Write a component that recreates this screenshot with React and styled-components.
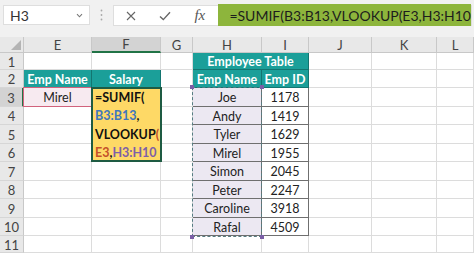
import React from 'react';
import styled, { createGlobalStyle, css } from 'styled-components';

const Global = createGlobalStyle`
  html, body { margin: 0; padding: 0; background: #fff; overflow: hidden; }
  body { font-family: Lato, "Liberation Sans", sans-serif; }
`;

const Page = styled.div`
  width: 474px;
  height: 253px;
  overflow: hidden;
  background: #fff;
  display: flex;
  flex-direction: column;
`;

const Toolbar = styled.div`
  height: 37px;
  flex: none;
  box-sizing: border-box;
  background: #f1f1f1;
  display: flex;
  align-items: flex-start;
  padding: 5px 2px 0 3px;
`;

const NameBox = styled.div`
  width: 107px;
  height: 20px;
  box-sizing: border-box;
  background: #fff;
  border: 1px solid #dedede;
  display: flex;
  align-items: center;
  justify-content: space-between;
  padding: 0 6px 0 6px;
  font-size: 14px;
  color: #333;
`;

const Grip = styled.div`
  width: 30px;
  height: 20px;
  display: flex;
  align-items: center;
  justify-content: center;
`;

const FxBox = styled.div`
  flex: 1;
  height: 21px;
  box-sizing: border-box;
  background: #fff;
  border: 1px solid #dedede;
  display: flex;
  align-items: stretch;
`;

const FxIcons = styled.div`
  width: 104px;
  flex: none;
  display: flex;
  align-items: center;
  gap: 23px;
  padding-left: 12px;
  box-sizing: border-box;
`;

const FxLabel = styled.span`
  font-family: "Liberation Serif", serif;
  font-style: italic;
  font-size: 15px;
  color: #555;
  line-height: 1;
`;

const Formula = styled.div`
  flex: 1;
  background: #8db53c;
  margin: -2px 0 -1px;
  display: flex;
  align-items: center;
  padding-left: 11px;
  font-size: 14px;
  color: #1d1d1d;
  white-space: nowrap;
  overflow: hidden;
`;

const Sheet = styled.div`
  flex: 1;
  display: grid;
  grid-template-columns: 24px 68px 69px 32px 69px 47px 63px 65px 1fr;
  grid-template-rows: 16px 17px 18px 19px 18px 19px 18px 19px 18px 19px 18px 17px;
`;

const kinds = {
  plain: css`
    background: #fff;
    border-right: 1px solid #dcdcdc;
    border-bottom: 1px solid #dcdcdc;
  `,
  head: css`
    background: #1b9f99;
    color: #fff;
    font-weight: 700;
    border-right: 1px solid #137570;
    border-bottom: 1px solid #137570;
  `,
  name: css`
    background: #ece8f2;
    border-right: 1px solid #6f6f6f;
    border-bottom: 1px solid #6f6f6f;
  `,
  id: css`
    background: #fff;
    border-right: 1px solid #6f6f6f;
    border-bottom: 1px solid #6f6f6f;
  `,
  ref: css`
    background: #f7eaf0;
    border: 1.5px solid #d1627c;
    margin: -1px 0 0 -1px;
  `,
};

const Cell = styled.div`
  grid-row: ${(p) => p.$r};
  grid-column: ${(p) => p.$c};
  box-sizing: border-box;
  display: flex;
  align-items: center;
  justify-content: center;
  padding-top: 1px;
  font-size: 12.5px;
  color: #222;
  white-space: nowrap;
  overflow: hidden;
  ${(p) => kinds[p.$kind || 'plain']}
`;

const ColHead = styled.div`
  grid-row: 1;
  grid-column: ${(p) => p.$c};
  box-sizing: border-box;
  background: ${(p) => (p.$sel ? '#d3d3d3' : '#e8e8e8')};
  border-right: 1px solid #c8c8c8;
  border-bottom: ${(p) => (p.$sel ? '2px solid #217346' : '1px solid #c8c8c8')};
  display: flex;
  align-items: center;
  justify-content: center;
  font-size: 13px;
  color: #444;
`;

const RowHead = styled.div`
  grid-row: ${(p) => p.$r};
  grid-column: 1;
  box-sizing: border-box;
  background: ${(p) => (p.$sel ? '#d3d3d3' : '#e8e8e8')};
  border-right: ${(p) => (p.$sel ? '2px solid #217346' : '1px solid #c8c8c8')};
  border-bottom: 1px solid #d6d6d6;
  display: flex;
  align-items: center;
  justify-content: center;
  padding-top: 1px;
  font-size: 13px;
  color: #444;
`;

const Corner = styled.div`
  grid-row: 1;
  grid-column: 1;
  box-sizing: border-box;
  background: #e8e8e8;
  border-right: 1px solid #c8c8c8;
  border-bottom: 1px solid #c8c8c8;
  display: flex;
  align-items: flex-end;
  justify-content: flex-end;
  padding: 0 2px 2px 0;
`;

const EditCell = styled.div`
  grid-row: 4 / span 4;
  grid-column: 3;
  box-sizing: border-box;
  margin: -1px -1px 0 -1px;
  background: #fed966;
  border: 2px solid #1e5b43;
  padding: 0 0 0 2px;
  font-size: 12.5px;
  font-weight: 700;
  line-height: 18.3px;
  color: #111;
  white-space: nowrap;
  overflow: hidden;
`;

const Tok = styled.span`
  color: ${(p) => p.$color};
`;

const RangeMark = styled.div`
  grid-row: 4 / span 8;
  grid-column: 5;
  box-sizing: border-box;
  margin: -1px 0 -1px -1px;
  border: 1.5px dashed #567c82;
  pointer-events: none;
  position: relative;
`;

const Handle = styled.span`
  position: absolute;
  width: 4px;
  height: 4px;
  background: #7b5fa6;
  ${(p) => (p.$top ? 'top: -3px;' : 'bottom: -3px;')}
  ${(p) => (p.$left ? 'left: -3px;' : 'right: -3px;')}
`;

const cols = ['E', 'F', 'G', 'H', 'I', 'J', 'K', 'L'];

const names = ['Joe', 'Andy', 'Tyler', 'Mirel', 'Simon', 'Peter', 'Caroline', 'Rafal'];
const ids = ['1178', '1419', '1629', '1955', '2045', '2247', '3918', '4509'];

function cellFor(col, row) {
  if (col === 'E' && row === 2) return { text: 'Emp Name', kind: 'head' };
  if (col === 'F' && row === 2) return { text: 'Salary', kind: 'head' };
  if (col === 'E' && row === 3) return { text: 'Mirel', kind: 'ref' };
  if (col === 'H' && row === 2) return { text: 'Emp Name', kind: 'head' };
  if (col === 'I' && row === 2) return { text: 'Emp ID', kind: 'head' };
  if (col === 'H' && row >= 3 && row <= 10) return { text: names[row - 3], kind: 'name' };
  if (col === 'I' && row >= 3 && row <= 10) return { text: ids[row - 3], kind: 'id' };
  return { text: '', kind: 'plain' };
}

export default function App() {
  const cells = [];
  for (let row = 1; row <= 11; row++) {
    cols.forEach((col, i) => {
      const c = i + 2;
      const r = row + 1;
      if (col === 'F' && row >= 3 && row <= 6) return;
      if (row === 1 && col === 'I') return;
      if (row === 1 && col === 'H') {
        cells.push(
          <Cell key="H1" $r={r} $c="5 / span 2" $kind="head">
            Employee Table
          </Cell>
        );
        return;
      }
      const d = cellFor(col, row);
      cells.push(
        <Cell key={col + row} $r={r} $c={c} $kind={d.kind}>
          {d.text}
        </Cell>
      );
    });
  }

  return (
    <Page>
      <Global />
      <Toolbar>
        <NameBox>
          <span>H3</span>
          <svg width="7" height="5" viewBox="0 0 7 5">
            <path d="M1 1.2 L3.5 3.8 L6 1.2" fill="none" stroke="#777" strokeWidth="1.1" />
          </svg>
        </NameBox>
        <Grip>
          <svg width="3" height="12" viewBox="0 0 3 12">
            <circle cx="1.5" cy="1.5" r="0.9" fill="#a8a8a8" />
            <circle cx="1.5" cy="6" r="0.9" fill="#a8a8a8" />
            <circle cx="1.5" cy="10.5" r="0.9" fill="#a8a8a8" />
          </svg>
        </Grip>
        <FxBox>
          <FxIcons>
            <svg width="10" height="10" viewBox="0 0 10 10">
              <path d="M1 1 L9 9 M9 1 L1 9" stroke="#666" strokeWidth="1.1" />
            </svg>
            <svg width="12" height="10" viewBox="0 0 12 10">
              <path d="M1 5.5 L4.3 8.6 L11 1.2" fill="none" stroke="#666" strokeWidth="1.4" />
            </svg>
            <FxLabel>fx</FxLabel>
          </FxIcons>
          <Formula>=SUMIF(B3:B13,VLOOKUP(E3,H3:H10</Formula>
        </FxBox>
      </Toolbar>
      <Sheet>
        <Corner>
          <svg width="10" height="10" viewBox="0 0 10 10">
            <polygon points="10,0 10,10 0,10" fill="#b4b4b4" />
          </svg>
        </Corner>
        {cols.map((col, i) => (
          <ColHead key={col} $c={i + 2} $sel={col === 'F'}>
            {col}
          </ColHead>
        ))}
        {Array.from({ length: 11 }, (_, i) => (
          <RowHead key={i} $r={i + 2} $sel={i + 1 === 3}>
            {i + 1}
          </RowHead>
        ))}
        {cells}
        <EditCell>
          <div>=SUMIF(</div>
          <div>
            <Tok $color="#3f76bd">B3:B13</Tok>,
          </div>
          <div>
            VLOOKUP<Tok $color="#c4502a">(</Tok>
          </div>
          <div>
            <Tok $color="#c4502a">E3</Tok>,<Tok $color="#7d5fa8">H3:H10</Tok>
          </div>
        </EditCell>
        <RangeMark>
          <Handle $top $left />
          <Handle $top />
          <Handle $left />
          <Handle />
        </RangeMark>
      </Sheet>
    </Page>
  );
}
